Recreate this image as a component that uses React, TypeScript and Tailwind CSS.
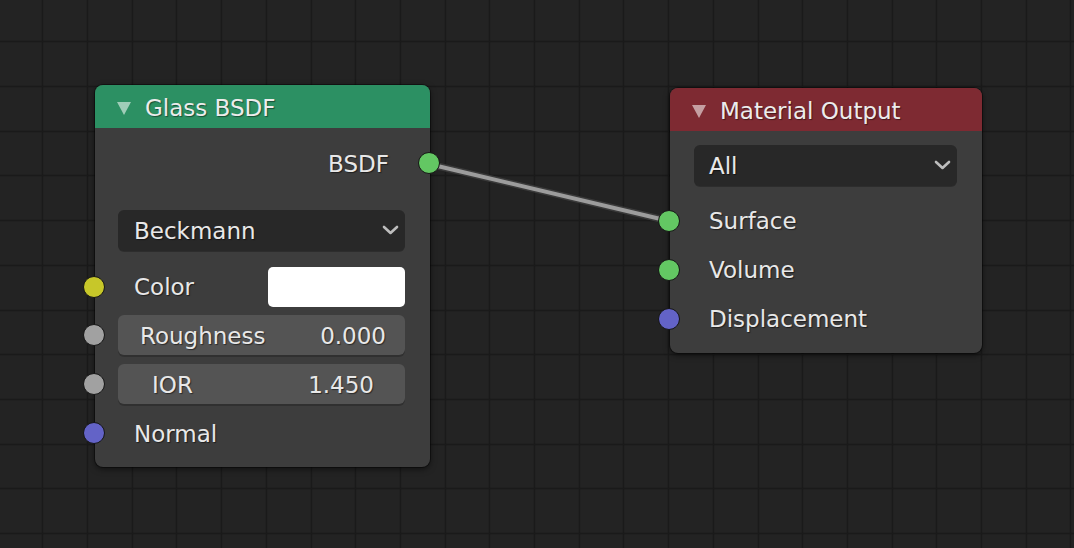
import React from "react";

const FONT = { fontFamily: '"DejaVu Sans", "Noto Sans", sans-serif' };

// socket colours taken from Blender's default theme
const SOCKET: Record<string, string> = {
    shader: "bg-[#63c763]",
    color: "bg-[#c7c729]",
    float: "bg-[#a1a1a1]",
    vector: "bg-[#6363c7]",
};

function Socket({ kind, side }: { kind: string; side: "left" | "right" }) {
    return (
        <span
            className={`absolute top-1/2 -translate-y-1/2 w-[22px] h-[22px] rounded-full border-[1.5px] border-[#151515] ${SOCKET[kind]} ${
                side === "left" ? "left-[-12px]" : "right-[-10px]"
            }`}
        />
    );
}

function Collapse() {
    return (
        <svg width="14" height="13" viewBox="0 0 14 13" className="shrink-0">
            <polygon points="0,0 14,0 7,13" fill="rgba(255,255,255,0.55)" />
        </svg>
    );
}

function Chevron() {
    return (
        <svg width="17" height="11" viewBox="0 0 17 11" className="shrink-0">
            <polyline points="2,2 8.5,8 15,2" fill="none" stroke="#bdbdbd" strokeWidth="2.6" strokeLinecap="round" strokeLinejoin="round" />
        </svg>
    );
}

function Header({ title, color }: { title: string; color: string }) {
    return (
        <div className={`h-[43px] flex items-center pt-[3px] pl-[22px] gap-[14px] rounded-t-[8px] ${color}`}>
            <Collapse />
            <span className="text-[23px] text-[#ececec] [text-shadow:1px_1px_1px_rgba(0,0,0,0.45)]">{title}</span>
        </div>
    );
}

const label = "pt-[2px] text-[23px] text-[#e8e8e8] [text-shadow:1px_1px_1px_rgba(0,0,0,0.5)]";

function Grid() {
    const xs = Array.from({ length: 25 }, (_, k) => Math.round(43.3 + 44.7 * k) - 0.5);
    const ys = Array.from({ length: 13 }, (_, k) => Math.round(42.3 + 44.7 * k) - 0.5);
    return (
        <svg className="absolute inset-0" width="1074" height="548">
            {xs.map(x => (
                <line key={"x" + x} x1={x} y1={0} x2={x} y2={548} stroke="#1a1a1a" strokeWidth="1.4" />
            ))}
            {ys.map(y => (
                <line key={"y" + y} x1={0} y1={y} x2={1074} y2={y} stroke="#1a1a1a" strokeWidth="1.4" />
            ))}
            {/* link BSDF -> Surface */}
            <line x1="429" y1="164" x2="669" y2="221" stroke="#3a3a3a" strokeWidth="7" strokeLinecap="round" />
            <line x1="429" y1="164" x2="669" y2="221" stroke="#9c9c9c" strokeWidth="4" strokeLinecap="round" />
        </svg>
    );
}

function GlassNode() {
    return (
        <div className="absolute left-[95px] top-[85px] w-[335px] h-[382px] rounded-[8px] bg-[#3d3d3d] shadow-[0_2px_6px_rgba(0,0,0,0.55)] ring-1 ring-black/40">
            <Header title="Glass BSDF" color="bg-[#2c9063]" />
            <div className="flex flex-col">
                <div className="relative h-[42px] mt-[14px] flex items-center justify-end pr-[41px]">
                    <span className={label}>BSDF</span>
                    <Socket kind="shader" side="right" />
                </div>
                <div className="ml-[23px] mr-[25px] mt-[26px] h-[41px] rounded-[6px] bg-[#282828] shadow-[0_1px_0_rgba(0,0,0,0.25)] flex items-center justify-between pl-[16px] pr-[6px]">
                    <span className={label}>Beckmann</span>
                    <Chevron />
                </div>
                <div className="relative mt-[15px] h-[41px] flex items-center pl-[39px] pr-[25px]">
                    <span className={`${label} flex-1`}>Color</span>
                    <span className="w-[137px] h-[40px] rounded-[5px] bg-white" />
                    <Socket kind="color" side="left" />
                </div>
                <div className="relative mt-[8px] h-[40px]">
                    <div className="ml-[23px] mr-[25px] h-full rounded-[6px] bg-[#545454] shadow-[0_2px_0_rgba(0,0,0,0.2)] flex items-center justify-between pl-[22px] pr-[19px]">
                        <span className={label}>Roughness</span>
                        <span className={label}>0.000</span>
                    </div>
                    <Socket kind="float" side="left" />
                </div>
                <div className="relative mt-[9px] h-[40px]">
                    <div className="ml-[23px] mr-[25px] h-full rounded-[6px] bg-[#545454] shadow-[0_2px_0_rgba(0,0,0,0.2)] flex items-center justify-between pl-[34px] pr-[31px]">
                        <span className={label}>IOR</span>
                        <span className={label}>1.450</span>
                    </div>
                    <Socket kind="float" side="left" />
                </div>
                <div className="relative mt-[5px] h-[48px] flex items-center pl-[39px]">
                    <span className={label}>Normal</span>
                    <Socket kind="vector" side="left" />
                </div>
            </div>
        </div>
    );
}

function OutputNode() {
    const inputs = [
        { name: "Surface", kind: "shader" },
        { name: "Volume", kind: "shader" },
        { name: "Displacement", kind: "vector" },
    ];
    return (
        <div className="absolute left-[670px] top-[88px] w-[312px] h-[265px] rounded-[8px] bg-[#3d3d3d] shadow-[0_2px_6px_rgba(0,0,0,0.55)] ring-1 ring-black/40">
            <Header title="Material Output" color="bg-[#7e2a32]" />
            <div className="flex flex-col">
                <div className="ml-[24px] mr-[25px] mt-[14px] h-[41px] rounded-[6px] bg-[#282828] shadow-[0_1px_0_rgba(0,0,0,0.25)] flex items-center justify-between pl-[15px] pr-[6px]">
                    <span className={label}>All</span>
                    <Chevron />
                </div>
                <div className="mt-[10px] flex flex-col">
                    {inputs.map(i => (
                        <div key={i.name} className="relative h-[49px] flex items-center pl-[39px]">
                            <span className={label}>{i.name}</span>
                            <Socket kind={i.kind} side="left" />
                        </div>
                    ))}
                </div>
            </div>
        </div>
    );
}

export default function App() {
    return (
        <div style={FONT} className="relative w-[1074px] h-[548px] overflow-hidden bg-[#232323]">
            <Grid />
            <GlassNode />
            <OutputNode />
        </div>
    );
}
